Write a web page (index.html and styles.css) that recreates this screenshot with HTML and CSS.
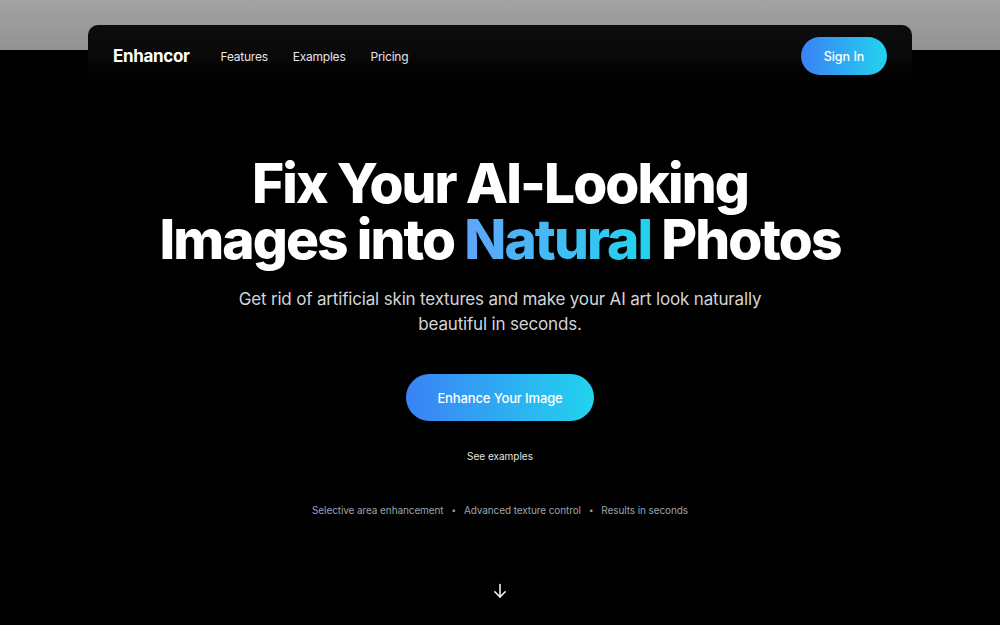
FILE: index.html
```html
<!DOCTYPE html>
<html lang="en">
<head>
    <meta charset="UTF-8">
    <meta name="viewport" content="width=device-width, initial-scale=1.0">
    <title>Enhancor</title>
    <link rel="stylesheet" href="styles.css">
</head>
<body>
    <header class="nav">
        <div class="nav-left">
            <a class="logo" href="#">Enhancor</a>
            <nav class="nav-links">
                <a href="#">Features</a>
                <a href="#">Examples</a>
                <a href="#">Pricing</a>
            </nav>
        </div>
        <a class="btn btn-sign" href="#">Sign In</a>
    </header>

    <main class="hero">
        <h1>
            <span class="line">Fix Your AI-Looking</span>
            <span class="line">Images into <span class="accent">Natural</span> Photos</span>
        </h1>
        <p class="lead">Get rid of artificial skin textures and make your AI art look naturally beautiful in seconds.</p>
        <a class="btn btn-main" href="#">Enhance Your Image</a>
        <a class="see-link" href="#">See examples</a>
        <ul class="perks">
            <li>Selective area enhancement</li>
            <li class="dot">•</li>
            <li>Advanced texture control</li>
            <li class="dot">•</li>
            <li>Results in seconds</li>
        </ul>
        <div class="scroll-down">
            <svg width="16" height="16" viewBox="0 0 16 16" fill="none" stroke="#fff" stroke-width="1.5" stroke-linecap="round" stroke-linejoin="round">
                <path d="M8 1.5v12.5"/>
                <path d="M2.8 8.8L8 14l5.2-5.2"/>
            </svg>
        </div>
    </main>
</body>
</html>
```

FILE: styles.css
```css
:root {
    --blue: #3b82f6;
    --cyan: #22d3ee;
    --text: #ffffff;
    --text-soft: #d4d4d8;
    --text-muted: #9ca3af;
}

* {
    box-sizing: border-box;
    margin: 0;
    padding: 0;
}

body {
    font-family: Inter, "Noto Sans", sans-serif;
    color: var(--text);
    background: linear-gradient(to bottom, #a2a2a2 0, #939393 50px, #000 50px, #000 100%);
    min-height: 100vh;
    overflow: hidden;
}

a {
    color: inherit;
    text-decoration: none;
}

.nav {
    width: 824px;
    height: 62px;
    margin: 25px auto 0;
    padding: 0 25px;
    display: flex;
    align-items: center;
    justify-content: space-between;
    background: linear-gradient(to bottom, #0d0d0d 0, #0a0a0a 25px, #000 62px);
    border-radius: 10px 10px 0 0;
}

.nav-left {
    display: flex;
    align-items: center;
}

.logo {
    font-size: 17px;
    font-weight: 700;
    letter-spacing: -0.02em;
    margin-right: 31px;
}

.nav-links {
    display: flex;
    gap: 25px;
}

.nav-links a {
    font-size: 12px;
    letter-spacing: -0.02em;
    color: #e4e4e7;
}

.btn {
    display: inline-flex;
    align-items: center;
    justify-content: center;
    border-radius: 999px;
    background: linear-gradient(to right, var(--blue), var(--cyan));
    color: #fff;
    font-weight: 500;
}

.btn-sign {
    width: 86px;
    height: 38px;
    font-size: 12.5px;
}

.hero {
    display: flex;
    flex-direction: column;
    align-items: center;
    text-align: center;
    padding-top: 68px;
}

h1 {
    display: flex;
    flex-direction: column;
    font-size: 55px;
    font-weight: 800;
    letter-spacing: -0.035em;
}

h1 .line {
    display: block;
    height: 56px;
    line-height: 56px;
}

.accent {
    background: linear-gradient(to right, #60a5fa, #22d3ee);
    -webkit-background-clip: text;
    background-clip: text;
    color: transparent;
}

.lead {
    max-width: 545px;
    margin-top: 20px;
    font-size: 17px;
    line-height: 25px;
    letter-spacing: -0.01em;
    color: var(--text-soft);
}

.btn-main {
    width: 188px;
    height: 47px;
    margin-top: 37px;
    font-size: 13px;
    letter-spacing: -0.01em;
}

.see-link {
    margin-top: 29px;
    font-size: 10px;
    color: #e4e4e7;
}

.perks {
    list-style: none;
    display: flex;
    gap: 8px;
    margin-top: 42px;
    font-size: 10px;
    letter-spacing: -0.01em;
    color: var(--text-muted);
}

.perks .dot {
    font-size: 8px;
    line-height: 13px;
}

.scroll-down {
    margin-top: 66px;
    display: flex;
}
```
